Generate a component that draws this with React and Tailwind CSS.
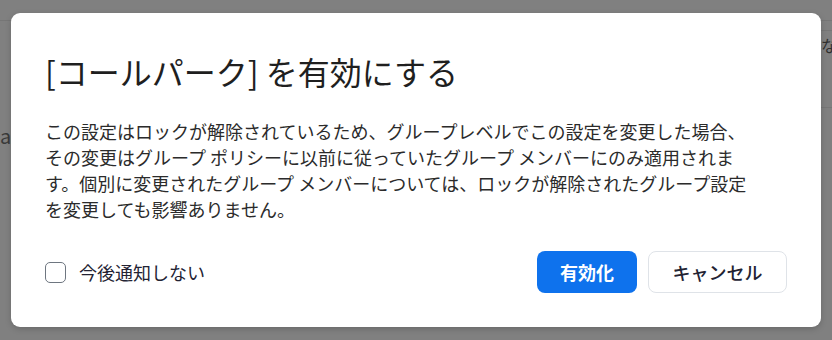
import React, { useState } from 'react';

const FONT = { fontFamily: '"Noto Sans CJK JP", "Noto Sans", sans-serif' };

function Checkbox({ checked, onChange, label }) {
  return (
    <label className="flex cursor-pointer items-center gap-[13px] select-none">
      <span
        className={[
          'flex h-[21px] w-[21px] items-center justify-center rounded-[5px] border-[1.5px]',
          checked ? 'border-[#0e72ed] bg-[#0e72ed]' : 'border-[#6e7680] bg-white'
        ].join(' ')}
      >
        {checked ? (
          <svg viewBox="0 0 16 16" className="h-[14px] w-[14px]" fill="none" stroke="white" strokeWidth="2">
            <path d="M3.5 8.5l3 3 6-7" />
          </svg>
        ) : null}
      </span>
      <input type="checkbox" className="hidden" checked={checked} onChange={(e) => onChange(e.target.checked)} />
      <span className="text-[18px] leading-[26px] text-[#232333]">{label}</span>
    </label>
  );
}

// dimmed page behind the modal
function Backdrop() {
  return (
    <div className="flex h-full w-full flex-col">
      <div className="h-[21px] shrink-0 border-b border-[#767676]" />
      <div className="flex flex-1 justify-between">
        <div className="w-[14px] pt-[103px] text-[20px] leading-[24px] text-[#3a3a3a]">a</div>
        <div className="w-[11px] overflow-hidden">
          <div className="mt-[9px] h-[78px] border-y border-[#767676] pt-[4px] whitespace-nowrap text-[16px] leading-[20px] text-[#2f2f2f]">
            なし
          </div>
        </div>
      </div>
    </div>
  );
}

export default function App() {
  const [muted, setMuted] = useState(false);

  return (
    <div className="relative h-[340px] w-full overflow-hidden bg-[#808080]" style={FONT}>
      <Backdrop />

      {/* modal */}
      <div className="absolute left-[11px] top-[13px] w-[810px] rounded-[9px] bg-white px-[34px] pb-[34px] pt-[36px] shadow-[0_2px_6px_rgba(0,0,0,0.18)]">
        <h2 className="text-[32px] font-normal leading-[44px] text-[#1f1f1f]">[コールパーク] を有効にする</h2>
        <p className="mt-[25px] text-[18px] leading-[26px] text-[#2b2b2b]">
          この設定はロックが解除されているため、グループレベルでこの設定を変更した場合、
          <br />
          その変更はグループ ポリシーに以前に従っていたグループ メンバーにのみ適用されま
          <br />
          す。個別に変更されたグループ メンバーについては、ロックが解除されたグループ設定
          <br />
          を変更しても影響ありません。
        </p>
        <div className="mt-[29px] flex items-center justify-between">
          <Checkbox checked={muted} onChange={setMuted} label="今後通知しない" />
          <div className="flex items-center gap-[11px]">
            <button
              type="button"
              className="flex h-[42px] w-[100px] items-center justify-center rounded-[8px] bg-[#0e72ed] text-[18px] font-bold text-white"
            >
              有効化
            </button>
            <button
              type="button"
              className="flex h-[42px] w-[139px] items-center justify-center rounded-[8px] border border-[#dfe3e8] bg-white text-[18px] font-medium text-[#232333]"
            >
              キャンセル
            </button>
          </div>
        </div>
      </div>
    </div>
  );
}
